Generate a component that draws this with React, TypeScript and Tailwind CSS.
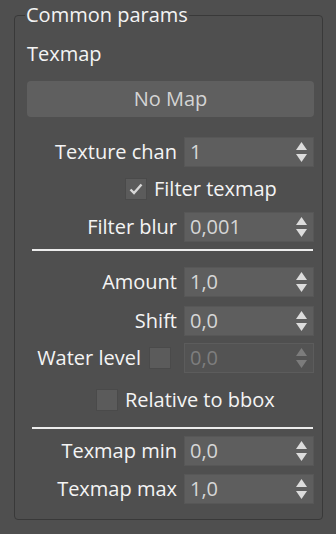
import { FC } from "react";

const font = { fontFamily: '"Open Sans", "Noto Sans", sans-serif' };

interface SpinnerProps {
  value: string;
  disabled?: boolean;
}

const Arrows: FC<{ disabled?: boolean }> = ({ disabled }) => (
  <svg width="11" height="20" viewBox="0 0 11 20" className="shrink-0">
    <polygon points="5.5,0 11,8 0,8" fill={disabled ? "#7c7c7c" : "#dcdcdc"} />
    <polygon points="0,12 11,12 5.5,20" fill={disabled ? "#7c7c7c" : "#dcdcdc"} />
  </svg>
);

const Spinner: FC<SpinnerProps> = ({ value, disabled }) => (
  <div
    className={`flex h-[30px] w-[130px] shrink-0 items-center justify-between border pl-[5px] pr-[6px] ${
      disabled
        ? "border-[#5c5c5c] bg-[#535353] text-[#7e7e7e]"
        : "border-[#575757] bg-[#5e5e5e] text-[#d6d6d6]"
    }`}
  >
    <span className="leading-none">{value}</span>
    <Arrows disabled={disabled} />
  </div>
);

const Check: FC<{ checked?: boolean }> = ({ checked }) => (
  <div className="flex h-[22px] w-[22px] shrink-0 items-center justify-center border border-[#4a4a4a] bg-[#5b5b5b]">
    {checked && (
      <svg width="14" height="12" viewBox="0 0 14 12">
        <polyline
          points="1.5,6.5 5,10 12.5,1.5"
          fill="none"
          stroke="#d8d8d8"
          strokeWidth="2.4"
        />
      </svg>
    )}
  </div>
);

interface RowProps {
  label: string;
  value: string;
  className?: string;
  disabled?: boolean;
}

const Row: FC<RowProps> = ({ label, value, className, disabled }) => (
  <div className={`flex h-[30px] items-center justify-end gap-[7px] ${className ?? ""}`}>
    <span className="leading-none">{label}</span>
    <Spinner value={value} disabled={disabled} />
  </div>
);

const Separator: FC<{ className?: string }> = ({ className }) => (
  <div className={`ml-[5px] mr-[1px] h-[2px] bg-[#ececec] ${className ?? ""}`} />
);

export default function App() {
  return (
    <div
      className="h-[534px] w-[336px] bg-[#4f4f4f] pl-[14px] pt-[4px] text-[20px] text-[#f4f4f4]"
      style={font}
    >
      <fieldset className="h-[516px] w-[309px] rounded-[4px] border border-[#393939] pl-[12px] pr-[8px]">
        <legend className="ml-[-2px] px-[1px] leading-[22px]">Common params</legend>

        <div className="mt-[14px] leading-[27px]">Texmap</div>

        <button className="mt-[14px] flex h-[36px] w-full items-center justify-center rounded-[4px] bg-[#5f5f5f] text-[#d4d4d4]">
          No Map
        </button>

        <Row label="Texture chan" value="1" className="mt-[20px]" />

        <div className="mt-[11px] flex h-[22px] items-center pl-[98px]">
          <Check checked />
          <span className="ml-[7px] leading-none">Filter texmap</span>
        </div>

        <Row label="Filter blur" value="0,001" className="mt-[12px]" />

        <Separator className="mt-[7px]" />

        <Row label="Amount" value="1,0" className="mt-[16px]" />
        <Row label="Shift" value="0,0" className="mt-[9px]" />

        <div className="mt-[7px] flex h-[30px] items-center justify-end">
          <span className="leading-none">Water level</span>
          <div className="ml-[8px] mr-[13px]">
            <Check />
          </div>
          <Spinner value="0,0" disabled />
        </div>

        <div className="mt-[16px] flex h-[22px] items-center pl-[69px]">
          <Check />
          <span className="ml-[7px] leading-none">Relative to bbox</span>
        </div>

        <Separator className="mt-[16px]" />

        <Row label="Texmap min" value="0,0" className="mt-[7px]" />
        <Row label="Texmap max" value="1,0" className="mt-[8px]" />
      </fieldset>
    </div>
  );
}
